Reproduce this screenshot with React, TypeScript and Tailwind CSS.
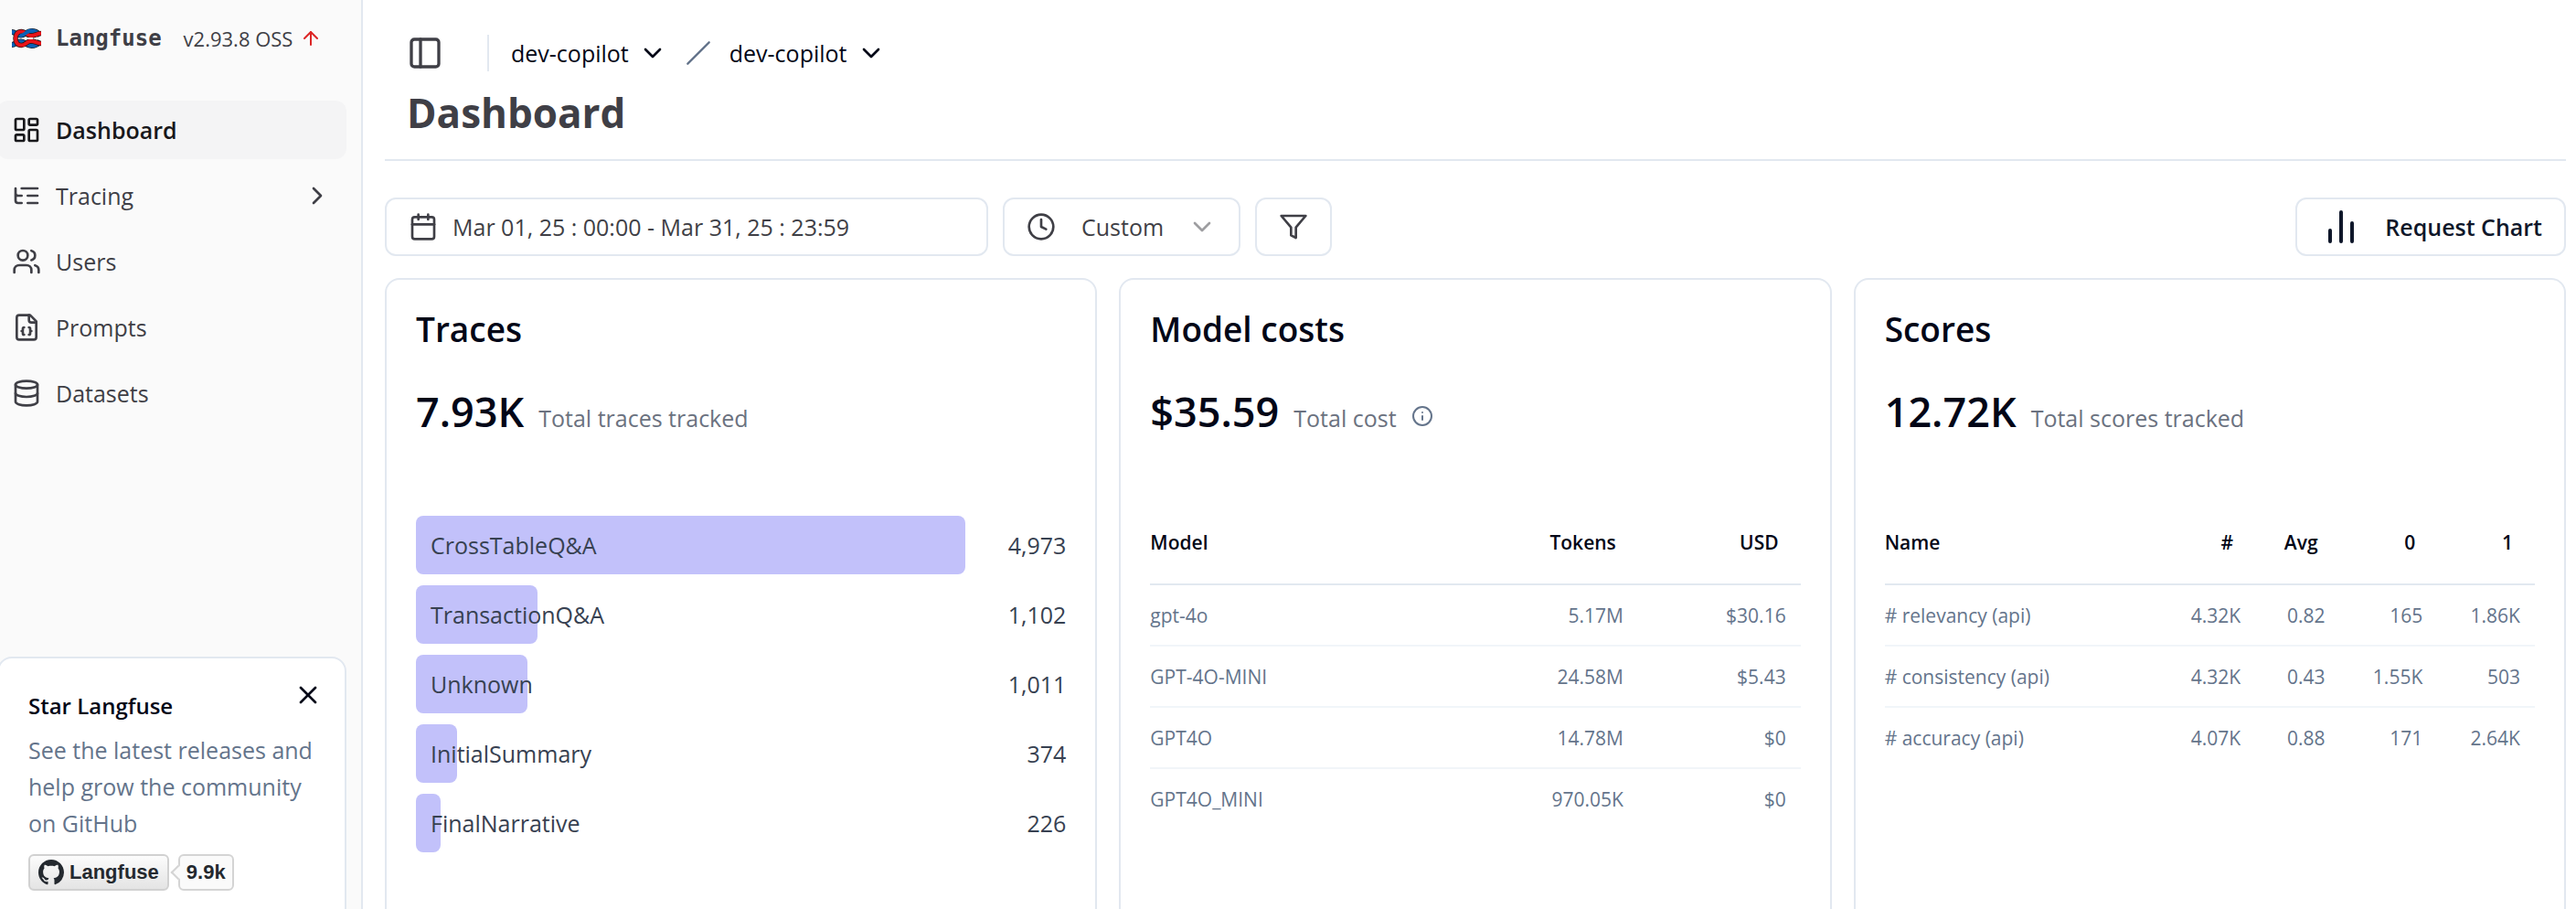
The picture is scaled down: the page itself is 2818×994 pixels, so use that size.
import type { ReactNode } from "react";
import {
  ArrowUp,
  Calendar,
  ChevronDown,
  ChevronRight,
  Clock,
  Database,
  Info,
  LayoutDashboard,
  PanelLeft,
  Slash,
  Users,
  X,
} from "lucide-react";

type IconProps = { className?: string };

function StrokeIcon({ className, children }: IconProps & { children: ReactNode }) {
  return (
    <svg
      viewBox="0 0 24 24"
      fill="none"
      stroke="currentColor"
      strokeWidth="2"
      strokeLinecap="round"
      strokeLinejoin="round"
      className={className}
      aria-hidden="true"
    >
      {children}
    </svg>
  );
}

const ListTreeIcon = ({ className }: IconProps) => (
  <StrokeIcon className={className}>
    <path d="M21 12h-8M21 6H8M21 18h-8M3 6v4c0 1.1.9 2 2 2h3M3 10v6c0 1.1.9 2 2 2h3" />
  </StrokeIcon>
);

const FileJsonIcon = ({ className }: IconProps) => (
  <StrokeIcon className={className}>
    <path d="M15 2H6a2 2 0 0 0-2 2v16a2 2 0 0 0 2 2h12a2 2 0 0 0 2-2V7Z" />
    <path d="M14 2v4a2 2 0 0 0 2 2h4" />
    <path d="M10 12a1 1 0 0 0-1 1v1a1 1 0 0 1-1 1 1 1 0 0 1 1 1v1a1 1 0 0 0 1 1" />
    <path d="M14 18a1 1 0 0 0 1-1v-1a1 1 0 0 1 1-1 1 1 0 0 1-1-1v-1a1 1 0 0 0-1-1" />
  </StrokeIcon>
);

const FilterIcon = ({ className }: IconProps) => (
  <StrokeIcon className={className}>
    <polygon points="22 3 2 3 10 12.46 10 19 14 21 14 12.46 22 3" />
  </StrokeIcon>
);

const BarsIcon = ({ className }: IconProps) => (
  <StrokeIcon className={className}>
    <path d="M18 20V10M12 20V4M6 20v-6" />
  </StrokeIcon>
);

const GithubMark = ({ className }: IconProps) => (
  <svg viewBox="0 0 16 16" fill="currentColor" className={className} aria-hidden="true">
    <path d="M8 0C3.58 0 0 3.58 0 8c0 3.54 2.29 6.53 5.47 7.59.4.07.55-.17.55-.38 0-.19-.01-.82-.01-1.49-2.01.37-2.53-.49-2.69-.94-.09-.23-.48-.94-.82-1.13-.28-.15-.68-.52-.01-.53.63-.01 1.08.58 1.23.82.72 1.21 1.87.87 2.33.66.07-.52.28-.87.51-1.07-1.78-.2-3.64-.89-3.64-3.95 0-.87.31-1.59.82-2.15-.08-.2-.36-1.02.08-2.12 0 0 .67-.21 2.2.82.64-.18 1.32-.27 2-.27s1.36.09 2 .27c1.53-1.04 2.2-.82 2.2-.82.44 1.1.16 1.92.08 2.12.51.56.82 1.27.82 2.15 0 3.07-1.87 3.75-3.65 3.95.29.25.54.73.54 1.48 0 1.07-.01 1.93-.01 2.2 0 .21.15.46.55.38A8.01 8.01 0 0 0 16 8c0-4.42-3.58-8-8-8Z" />
  </svg>
);

const KnotLogo = ({ className }: IconProps) => (
  <svg viewBox="0 0 32 22" fill="none" className={className} aria-hidden="true">
    <path d="M9 11H25" stroke="#ffffff" strokeWidth="5" />
    <path
      d="M0 4C4 4 5 8 10 7.500C15 7 16 3 21.500 3C26 3 29 5 31 8M0 18C4 18 5 14 10 14.500C15 15 16 19 21.500 19C26 19 29 17 31 14"
      stroke="#14202e"
      strokeWidth="6"
    />
    <path
      d="M0 4C4 4 5 8 10 7.500C15 7 16 3 21.500 3C26 3 29 5 31 8M0 18C4 18 5 14 10 14.500C15 15 16 19 21.500 19C26 19 29 17 31 14"
      stroke="#0a60b5"
      strokeWidth="4.500"
    />
    <path
      d="M32 5.500C27 5.500 25 8.500 20 8C16 7.500 15 3.500 10.500 3.500C6 3.500 4 7 4 11S6 18.500 10.500 18.500C15 18.500 16 14.500 20 14C25 13.500 27 16.500 32 16.500"
      stroke="#2b1a1c"
      strokeWidth="5.500"
    />
    <path
      d="M32 5.500C27 5.500 25 8.500 20 8C16 7.500 15 3.500 10.500 3.500C6 3.500 4 7 4 11S6 18.500 10.500 18.500C15 18.500 16 14.500 20 14C25 13.500 27 16.500 32 16.500"
      stroke="#e8131a"
      strokeWidth="4"
    />
    <path d="M9 8C12 8 14 6 16 4.500C18 3 19 2.500 22 2.500" stroke="#0a60b5" strokeWidth="4" />
    <path d="M12 11H23" stroke="#ffffff" strokeWidth="2" />
  </svg>
);

const navItems = [
  { label: "Dashboard", Icon: LayoutDashboard, active: true },
  { label: "Tracing", Icon: ListTreeIcon, expandable: true },
  { label: "Users", Icon: Users },
  { label: "Prompts", Icon: FileJsonIcon },
  { label: "Datasets", Icon: Database },
];

function Sidebar() {
  return (
    <aside className="flex w-[397px] shrink-0 flex-col overflow-hidden border-r-2 border-[#e2e8f0] bg-[#fafafa] pr-4 text-[#3f3f46]">
      <div className="flex h-[84px] items-center pl-[13px]">
        <KnotLogo className="h-[22px] w-8" />
        <span className="ml-4 font-['DejaVu_Sans_Mono',monospace] text-[24px] leading-8 font-bold">Langfuse</span>
        <a href="#releases" className="ml-6 flex items-center gap-2 text-[22px] leading-8">
          v2.93.8 OSS
          <ArrowUp className="size-6 text-[#dc2626]" />
        </a>
      </div>
      <nav className="mt-[26px] -ml-[3px] flex flex-col gap-2">
        {navItems.map(({ label, Icon, active, expandable }) => (
          <a
            key={label}
            href={"#" + label.toLowerCase()}
            className={
              active
                ? "flex h-16 items-center gap-4 rounded-xl bg-[#f4f4f5] px-4 font-semibold text-[#18181b]"
                : "flex h-16 items-center gap-4 rounded-xl px-4"
            }
          >
            <Icon className="size-8 shrink-0" />
            <span className="flex-1">{label}</span>
            {expandable && <ChevronRight className="size-8" />}
          </a>
        ))}
      </nav>
      <section className="mt-auto -mb-4 -ml-[3px] rounded-2xl border-2 border-[#e2e8f0] bg-white px-8 pt-8 pb-[34px]">
        <div className="flex justify-between text-[#020617]">
          <h2 className="text-[24px] font-semibold">Star Langfuse</h2>
          <button type="button" aria-label="Dismiss" className="-mt-2 -mr-2 size-8">
            <X className="size-8" />
          </button>
        </div>
        <p className="mt-2 text-[#64748b]">See the latest releases and help grow the community on GitHub</p>
        <div className="mt-[14px] flex items-center gap-[10px] font-['Liberation_Sans',Arial,sans-serif] text-[22px] leading-9 font-bold text-[#24292f]">
          <a
            href="#github"
            className="flex items-center gap-[6px] rounded-md border-2 border-[#d1d1d1] bg-linear-to-b from-[#fcfcfc] to-[#e4e4e4] px-[9px]"
          >
            <GithubMark className="size-7" />
            Langfuse
          </a>
          <a href="#stargazers" className="relative rounded-md border-2 border-[#d4d4d4] bg-[#fafafa] px-[7px]">
            <span className="absolute top-3 -left-2 size-3 rotate-45 border-b-2 border-l-2 border-[#d4d4d4] bg-[#fafafa]" />
            9.9k
          </a>
        </div>
      </section>
    </aside>
  );
}

function ProjectMenu({ label }: { label: string }) {
  return (
    <button type="button" aria-haspopup="menu" className="flex items-center gap-[10px] text-[#020617]">
      {label}
      <ChevronDown className="size-8" />
    </button>
  );
}

function PageHeader() {
  return (
    <header className="border-b-2 border-[#e2e8f0] px-6 pt-9 pb-5">
      <div className="flex h-11 items-center">
        <button type="button" aria-label="Toggle sidebar" className="text-[#3f3f46]">
          <PanelLeft className="size-10" />
        </button>
        <span className="mr-6 ml-12 h-10 w-[2px] bg-[#e2e8f0]" />
        <ProjectMenu label="dev-copilot" />
        <Slash className="mx-5 size-7 text-[#64748b]" />
        <ProjectMenu label="dev-copilot" />
      </div>
      <h1 className="mt-3 text-[44px] leading-[62px] font-bold text-[#3f3f46]">Dashboard</h1>
    </header>
  );
}

function Toolbar() {
  return (
    <div className="mt-10 flex h-16 items-stretch gap-4 text-[#3f3f46]">
      <button
        type="button"
        className="flex w-[660px] items-center gap-4 rounded-xl border-2 border-[#e2e8f0] bg-white px-6 text-left"
      >
        <Calendar className="size-8" />
        Mar 01, 25 : 00:00 - Mar 31, 25 : 23:59
      </button>
      <label className="flex w-[260px] items-center rounded-xl border-2 border-[#e2e8f0] bg-white px-6">
        <Clock className="size-8" />
        <select aria-label="Time range" className="ml-7 flex-1 appearance-none bg-transparent outline-none">
          <option>Custom</option>
        </select>
        <ChevronDown className="size-8 opacity-50" />
      </label>
      <button
        type="button"
        aria-label="Filters"
        className="flex w-[84px] items-center justify-center rounded-xl border-2 border-[#e2e8f0] bg-white"
      >
        <FilterIcon className="size-8" />
      </button>
      <button
        type="button"
        className="ml-auto flex items-center gap-6 rounded-xl border-2 border-[#e2e8f0] bg-white px-6 font-semibold text-[#0f172a]"
      >
        <BarsIcon className="size-12" />
        Request Chart
      </button>
    </div>
  );
}

function Card({
  title,
  value,
  caption,
  info,
  children,
}: {
  title: string;
  value: string;
  caption: string;
  info?: boolean;
  children: ReactNode;
}) {
  return (
    <section className="min-w-0 rounded-2xl border-2 border-[#e2e8f0] bg-white px-8 pt-7 pb-8">
      <h2 className="text-[37px] leading-[52px] font-semibold text-[#020617]">{title}</h2>
      <div className="mt-7 flex items-baseline gap-4">
        <span className="text-[45px] leading-[72px] font-semibold text-[#020617]">{value}</span>
        <span className="text-[#6b7280]">{caption}</span>
        {info && <Info className="size-6 text-[#64748b]" />}
      </div>
      {children}
    </section>
  );
}

const traces = [
  { name: "CrossTableQ&A", count: 4973 },
  { name: "TransactionQ&A", count: 1102 },
  { name: "Unknown", count: 1011 },
  { name: "InitialSummary", count: 374 },
  { name: "FinalNarrative", count: 226 },
];

function TraceBars() {
  const max = traces[0].count;
  return (
    <ul className="mt-[78px] flex flex-col gap-3 text-[#374151]">
      {traces.map((t) => (
        <li key={t.name} className="flex items-center">
          <div className="min-w-0 flex-1">
            <div
              className="flex h-16 items-center rounded-lg bg-[#c2c1fa] pl-4 whitespace-nowrap"
              style={{ width: `${(t.count / max) * 100}%` }}
            >
              {t.name}
            </div>
          </div>
          <span className="w-[110px] text-right">{t.count.toLocaleString("en-US")}</span>
        </li>
      ))}
    </ul>
  );
}

function DataTable({ columns, rows, widths }: { columns: string[]; rows: string[][]; widths: string[] }) {
  return (
    <table className="mt-[61px] w-full table-fixed text-[21px] leading-8">
      <thead>
        <tr className="border-b-2 border-[#e2e8f0] text-[#020617]">
          {columns.map((c, i) => (
            <th
              key={c}
              scope="col"
              className={(i === 0 ? "text-left " : "pr-6 text-right ") + widths[i] + " h-[92px] font-semibold"}
            >
              {c}
            </th>
          ))}
        </tr>
      </thead>
      <tbody className="divide-y-2 divide-[#f1f5f9] text-[#64748b]">
        {rows.map((row) => (
          <tr key={row[0]}>
            {row.map((cell, i) => (
              <td key={i} className={(i === 0 ? "text-left" : "pr-4 text-right") + " h-[67px]"}>
                {cell}
              </td>
            ))}
          </tr>
        ))}
      </tbody>
    </table>
  );
}

export default function App() {
  return (
    <div className="flex h-screen overflow-hidden bg-white font-['Open_Sans','Noto_Sans',sans-serif] text-[25px] leading-10">
      <Sidebar />
      <main className="min-w-0 flex-1 overflow-hidden pr-[11px] pl-6">
        <PageHeader />
        <Toolbar />
        <div className="mt-6 grid min-h-screen grid-cols-3 gap-6">
          <Card title="Traces" value="7.93K" caption="Total traces tracked">
            <TraceBars />
          </Card>
          <Card title="Model costs" value="$35.59" caption="Total cost" info>
            <DataTable
              columns={["Model", "Tokens", "USD"]}
              widths={["w-[50%]", "w-[25%]", "w-[25%]"]}
              rows={[
                ["gpt-4o", "5.17M", "$30.16"],
                ["GPT-4O-MINI", "24.58M", "$5.43"],
                ["GPT4O", "14.78M", "$0"],
                ["GPT4O_MINI", "970.05K", "$0"],
              ]}
            />
          </Card>
          <Card title="Scores" value="12.72K" caption="Total scores tracked">
            <DataTable
              columns={["Name", "#", "Avg", "0", "1"]}
              widths={["w-[42%]", "w-[15%]", "w-[13%]", "w-[15%]", "w-[15%]"]}
              rows={[
                ["# relevancy (api)", "4.32K", "0.82", "165", "1.86K"],
                ["# consistency (api)", "4.32K", "0.43", "1.55K", "503"],
                ["# accuracy (api)", "4.07K", "0.88", "171", "2.64K"],
              ]}
            />
          </Card>
        </div>
      </main>
    </div>
  );
}
